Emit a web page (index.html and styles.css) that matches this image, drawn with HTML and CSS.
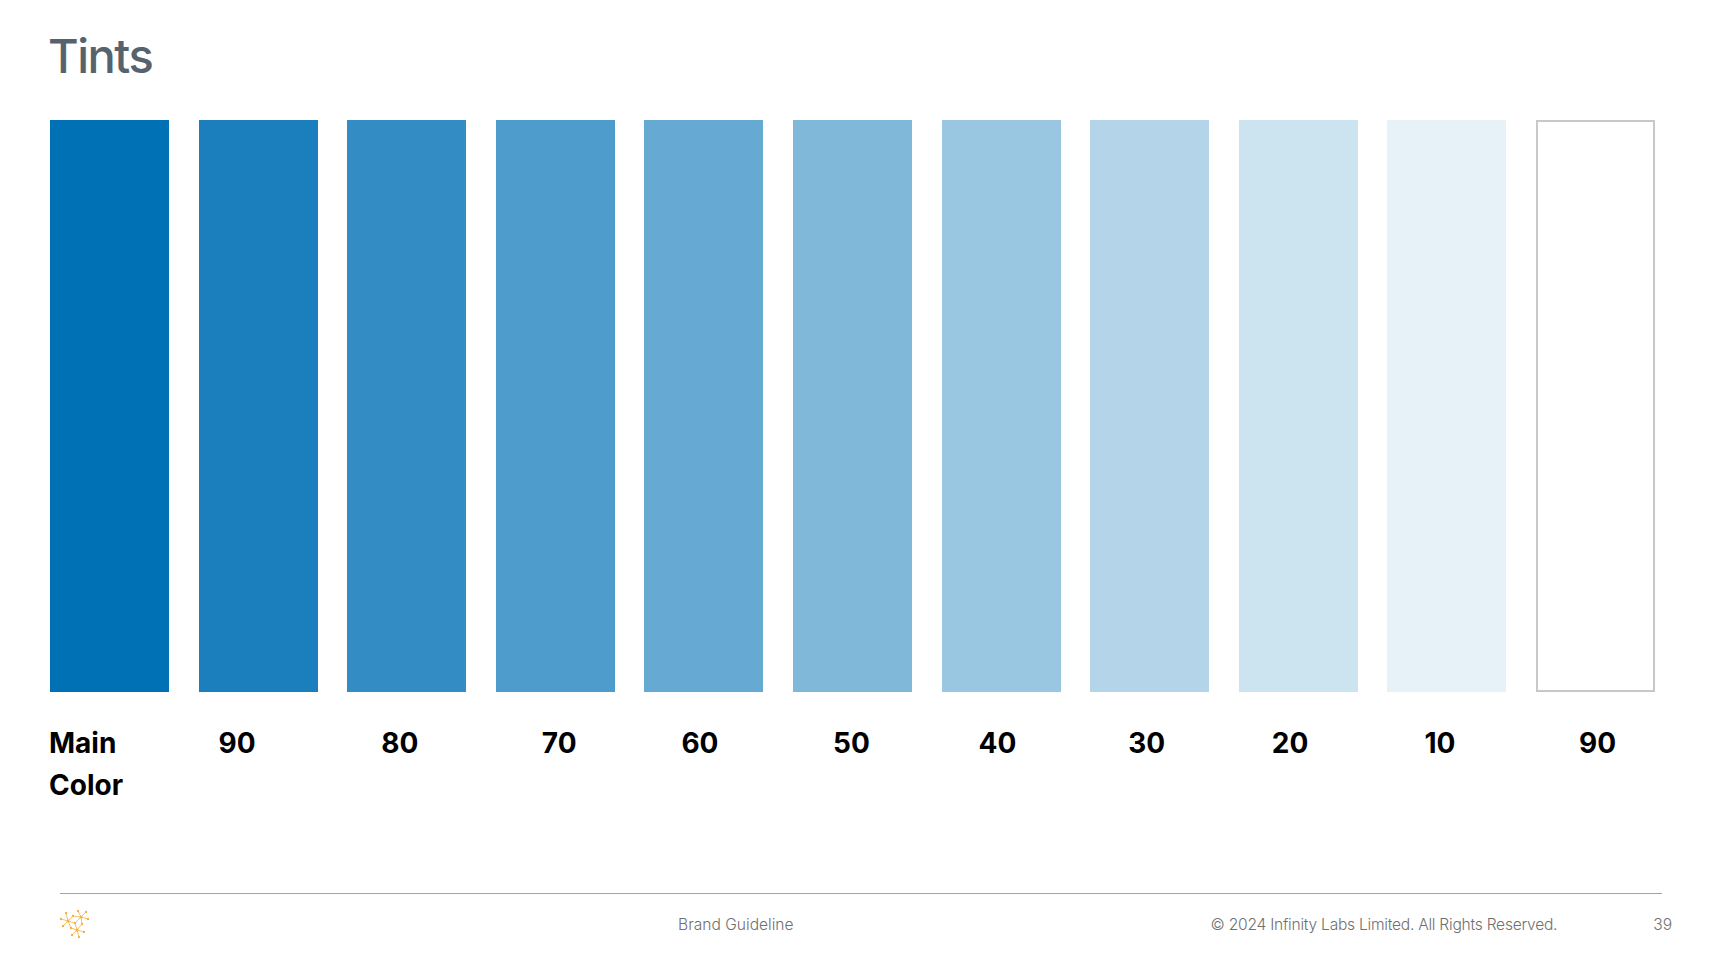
FILE: index.html
```html
<!DOCTYPE html>
<html lang="en">
<head>
<meta charset="utf-8">
<title>Tints</title>
<link rel="stylesheet" href="styles.css">
</head>
<body>
<div class="slide">
  <h1 class="title">Tints</h1>
  <div class="swatches">
    <div class="sw t100"></div>
    <div class="sw t90"></div>
    <div class="sw t80"></div>
    <div class="sw t70"></div>
    <div class="sw t60"></div>
    <div class="sw t50"></div>
    <div class="sw t40"></div>
    <div class="sw t30"></div>
    <div class="sw t20"></div>
    <div class="sw t10"></div>
    <div class="sw t0"></div>
  </div>
  <div class="labels">
    <div class="lb">Main<br>Color</div>
    <div class="lb">90</div>
    <div class="lb">80</div>
    <div class="lb">70</div>
    <div class="lb">60</div>
    <div class="lb">50</div>
    <div class="lb">40</div>
    <div class="lb">30</div>
    <div class="lb">20</div>
    <div class="lb">10</div>
    <div class="lb">90</div>
  </div>
  <footer class="footer">
    <div class="rule"></div>
    <div class="foot-row">
      <svg class="logo" width="32" height="32" viewBox="0 0 32 32">
        <g stroke="#f2b347" stroke-width="0.8" fill="none">
          <line x1="10" y1="13" x2="8" y2="5"/>
          <line x1="10" y1="13" x2="3" y2="11"/>
          <line x1="10" y1="13" x2="5" y2="18"/>
          <line x1="10" y1="13" x2="15" y2="8"/>
          <line x1="10" y1="13" x2="17" y2="15"/>
          <line x1="10" y1="13" x2="13" y2="20"/>
          <line x1="23" y1="9" x2="15" y2="8"/>
          <line x1="23" y1="9" x2="20" y2="3"/>
          <line x1="23" y1="9" x2="28" y2="4"/>
          <line x1="23" y1="9" x2="30" y2="11"/>
          <line x1="23" y1="9" x2="17" y2="15"/>
          <line x1="23" y1="9" x2="24" y2="16"/>
          <line x1="19" y1="22" x2="17" y2="15"/>
          <line x1="19" y1="22" x2="24" y2="16"/>
          <line x1="19" y1="22" x2="13" y2="20"/>
          <line x1="19" y1="22" x2="26" y2="24"/>
          <line x1="19" y1="22" x2="14" y2="27"/>
          <line x1="19" y1="22" x2="21" y2="29"/>
        </g>
        <g fill="#f2b347">
          <circle cx="10" cy="13" r="1.5"/>
          <circle cx="23" cy="9" r="1.5"/>
          <circle cx="19" cy="22" r="1.5"/>
          <circle cx="8" cy="5" r="1.2"/>
          <circle cx="3" cy="11" r="1.2"/>
          <circle cx="5" cy="18" r="1.2"/>
          <circle cx="15" cy="8" r="1.2"/>
          <circle cx="17" cy="15" r="1.2"/>
          <circle cx="13" cy="20" r="1.2"/>
          <circle cx="20" cy="3" r="1.2"/>
          <circle cx="28" cy="4" r="1.2"/>
          <circle cx="30" cy="11" r="1.2"/>
          <circle cx="24" cy="16" r="1.2"/>
          <circle cx="26" cy="24" r="1.2"/>
          <circle cx="14" cy="27" r="1.2"/>
          <circle cx="21" cy="29" r="1.2"/>
        </g>
      </svg>
      <span class="brand">Brand Guideline</span>
      <span class="copy">© 2024 Infinity Labs Limited. All Rights Reserved.</span>
      <span class="page">39</span>
    </div>
  </footer>
</div>
</body>
</html>
```

FILE: styles.css
```css
html, body {
  margin: 0;
  padding: 0;
  background: #ffffff;
}

.slide {
  width: 1726px;
  height: 973px;
  display: flex;
  flex-direction: column;
  box-sizing: border-box;
  font-family: "Inter", "Open Sans", sans-serif;
}

.title {
  margin: 28px 0 0 48px;
  font-size: 47px;
  line-height: 56px;
  font-weight: 500;
  color: #56626d;
  letter-spacing: -1.5px;
}

.swatches {
  margin: 36px 0 0 50px;
  width: 1605px;
  height: 572px;
  display: grid;
  grid-template-columns: repeat(11, 1fr);
  column-gap: 29.6px;
}

.sw { height: 100%; box-sizing: border-box; }
.t100 { background: #0071b5; }
.t90 { background: #1a7fbc; }
.t80 { background: #338dc4; }
.t70 { background: #4d9ccb; }
.t60 { background: #66aad3; }
.t50 { background: #80b8da; }
.t40 { background: #99c6e1; }
.t30 { background: #b3d4e9; }
.t20 { background: #cce3f0; }
.t10 { background: #e6f1f8; }
.t0 { background: #ffffff; border: 2px solid #c8c8c8; }

.labels {
  margin: 30px 0 0 50px;
  width: 1605px;
  display: grid;
  grid-template-columns: repeat(11, 1fr);
  column-gap: 29.6px;
}

.lb {
  font-size: 28px;
  line-height: 42px;
  font-weight: 700;
  color: #000000;
  white-space: nowrap;
}
.lb:nth-child(1) { margin-left: -1px; }
.lb:nth-child(2) { margin-left: 20px; }
.lb:nth-child(3) { margin-left: 34px; }
.lb:nth-child(4) { margin-left: 46px; }
.lb:nth-child(5) { margin-left: 37px; }
.lb:nth-child(6) { margin-left: 40px; }
.lb:nth-child(7) { margin-left: 37px; }
.lb:nth-child(8) { margin-left: 38px; }
.lb:nth-child(9) { margin-left: 33px; }
.lb:nth-child(10) { margin-left: 37px; }
.lb:nth-child(11) { margin-left: 43px; }

.footer {
  margin-top: auto;
  padding: 0 0 19px 60px;
}

.rule {
  width: 1602px;
  height: 1.5px;
  background: #a3a3a3;
}

.foot-row {
  display: flex;
  align-items: center;
  height: 60px;
  font-size: 15.6px;
  font-weight: 300;
  color: #707070;
}

.logo {
  margin-left: -2px;
  flex: none;
}

.brand { margin-left: 588px; }
.copy { margin-left: 417px; letter-spacing: -0.25px; }
.page { margin-left: 96px; }
```
